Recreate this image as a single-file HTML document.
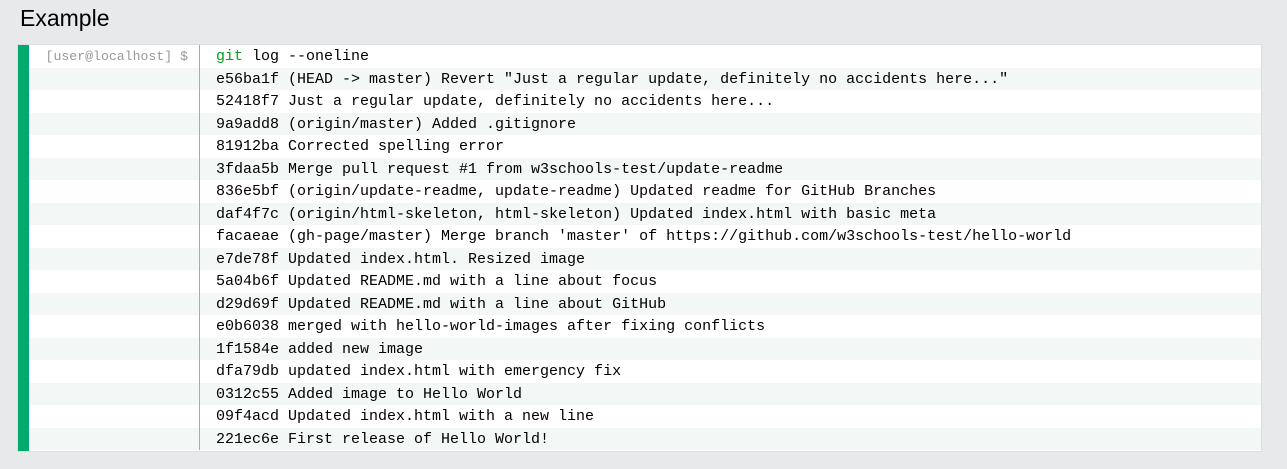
<!DOCTYPE html>
<html><head><style>
html,body{margin:0;padding:0;background:#e7e9eb;width:1287px;height:469px;overflow:hidden}
h2{position:absolute;left:20px;top:5px;margin:0;font:23px "Liberation Sans",sans-serif;color:#000}
.box{position:absolute;left:18px;top:45px;width:1243px;height:406px;background:#fff;border-left:11px solid #04aa6d;box-sizing:border-box;box-shadow:0 0 0 1px #ddd}
.row{height:22.5px;display:flex;font:15px/23.5px "Liberation Mono",monospace;color:#000}
.row:nth-child(even){background:#f3f8f6}
.g{width:171px;border-right:1px solid #aaa;box-sizing:border-box;text-align:right;padding-right:11px;color:#999;flex:none;font-size:13.2px}
.t{padding-left:16px;white-space:pre}
.gr{color:#04a020}
</style></head><body>
<h2>Example</h2>
<div class="box">
<div class="row"><div class="g">[user@localhost] $</div><div class="t"><span class="gr">git</span> log --oneline</div></div>
<div class="row"><div class="g"></div><div class="t">e56ba1f (HEAD -> master) Revert "Just a regular update, definitely no accidents here..."</div></div>
<div class="row"><div class="g"></div><div class="t">52418f7 Just a regular update, definitely no accidents here...</div></div>
<div class="row"><div class="g"></div><div class="t">9a9add8 (origin/master) Added .gitignore</div></div>
<div class="row"><div class="g"></div><div class="t">81912ba Corrected spelling error</div></div>
<div class="row"><div class="g"></div><div class="t">3fdaa5b Merge pull request #1 from w3schools-test/update-readme</div></div>
<div class="row"><div class="g"></div><div class="t">836e5bf (origin/update-readme, update-readme) Updated readme for GitHub Branches</div></div>
<div class="row"><div class="g"></div><div class="t">daf4f7c (origin/html-skeleton, html-skeleton) Updated index.html with basic meta</div></div>
<div class="row"><div class="g"></div><div class="t">facaeae (gh-page/master) Merge branch 'master' of https://github.com/w3schools-test/hello-world</div></div>
<div class="row"><div class="g"></div><div class="t">e7de78f Updated index.html. Resized image</div></div>
<div class="row"><div class="g"></div><div class="t">5a04b6f Updated README.md with a line about focus</div></div>
<div class="row"><div class="g"></div><div class="t">d29d69f Updated README.md with a line about GitHub</div></div>
<div class="row"><div class="g"></div><div class="t">e0b6038 merged with hello-world-images after fixing conflicts</div></div>
<div class="row"><div class="g"></div><div class="t">1f1584e added new image</div></div>
<div class="row"><div class="g"></div><div class="t">dfa79db updated index.html with emergency fix</div></div>
<div class="row"><div class="g"></div><div class="t">0312c55 Added image to Hello World</div></div>
<div class="row"><div class="g"></div><div class="t">09f4acd Updated index.html with a new line</div></div>
<div class="row"><div class="g"></div><div class="t">221ec6e First release of Hello World!</div></div>
</div>
</body></html>
